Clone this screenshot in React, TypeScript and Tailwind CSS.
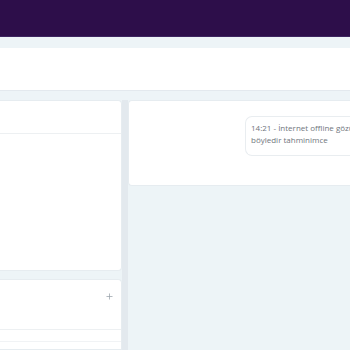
import { Plus } from "lucide-react";

const App = () => {
  return (
    <div className="w-[350px] h-[350px] overflow-hidden bg-[#edf4f7] flex flex-col font-['Open_Sans',sans-serif]">
      <header className="h-[37px] shrink-0 bg-[#2d0e4a] border-b border-[#3d2560]" />
      <div className="h-[11px] shrink-0" />
      <div className="h-[43px] shrink-0 bg-white border-b border-[#e3e9ee]" />
      <div className="flex flex-1 pt-[9px] min-h-0">
        <div className="w-[122px] shrink-0 flex flex-col gap-[8px]">
          <div className="h-[171px] bg-white rounded-r-[4px] border border-l-0 border-[#e6ecf0] flex flex-col">
            <div className="h-[33px] border-b border-[#edf0f2]" />
          </div>
          <div className="flex-1 bg-white rounded-tr-[4px] border border-l-0 border-[#e6ecf0] flex flex-col">
            <div className="h-[50px] border-b border-[#edf0f2] flex items-start justify-end pr-[7px] pt-[12px]">
              <Plus size={9} strokeWidth={2} className="text-[#9aa3ab]" />
            </div>
            <div className="h-[12px] border-b border-[#f1f3f5]" />
          </div>
        </div>
        <div className="w-[6px] shrink-0 bg-[#e3e9ee]" />
        <div className="flex-1 flex flex-col">
          <div className="h-[86px] bg-white rounded-l-[4px] border border-r-0 border-[#e6ecf0] pt-[15px] pl-[116px]">
            <div className="rounded-l-[7px] border border-r-0 border-[#e9edf0] pl-[5px] pt-[5px] pb-[9px] text-[8px] leading-[12px] text-[#70767d] whitespace-nowrap">
              <div>14:21 - İnternet offline gözüküyor</div>
              <div>böyledir tahminimce</div>
            </div>
          </div>
        </div>
      </div>
    </div>
  );
};

export default App;
